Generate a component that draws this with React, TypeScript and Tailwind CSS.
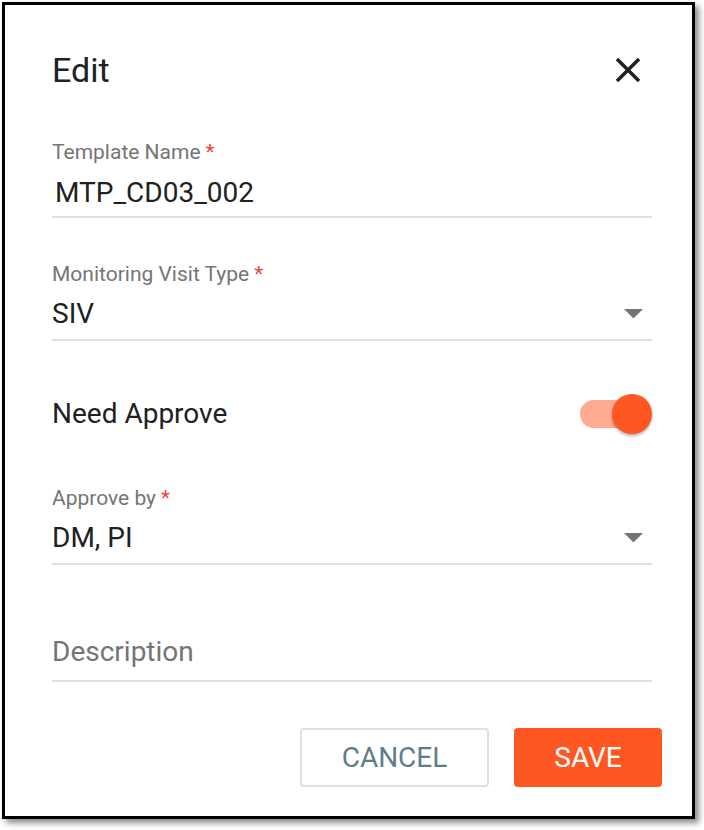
import React from 'react';

interface FieldProps {
  label: string;
  value: string;
  required?: boolean;
  select?: boolean;
  valueClass: string;
}

const Field: React.FC<FieldProps> = ({ label, value, required, select, valueClass }) => (
  <div className="border-b-2 border-[#e0e0e0]">
    <div className="h-[24px] text-[21px] leading-[24px] text-[#757575]">
      {label}
      {required && <span className="ml-[5px] text-[#f44336]">*</span>}
    </div>
    <div className={`flex items-center justify-between ${valueClass}`}>
      <span className="text-[28px] leading-[32px] text-[#212121]">{value}</span>
      {select && (
        <svg width="19" height="10" viewBox="0 0 19 10" className="mr-[9px]">
          <path d="M0 0h19L9.5 9.5z" fill="#757575" />
        </svg>
      )}
    </div>
  </div>
);

export default function App() {
  return (
    <div className="h-[830px] w-[704px] bg-white pl-[2px] pt-[2px] font-['Roboto',sans-serif]">
      <div className="flex h-[817px] w-[693px] flex-col border-[3px] border-black bg-white pl-[47px] pr-[30px] pt-[45px] shadow-[4px_4px_6px_rgba(0,0,0,0.45)]">
        <div className="mr-[10px] flex h-[40px] items-center justify-between">
          <h2 className="text-[34px] leading-[40px] text-[#212121]">Edit</h2>
          <svg width="42" height="42" viewBox="0 0 24 24" className="mr-[3px]">
            <path
              d="M19 6.41 17.59 5 12 10.59 6.41 5 5 6.41 10.59 12 5 17.59 6.41 19 12 13.41 17.59 19 19 17.59 13.41 12z"
              fill="#212121"
            />
          </svg>
        </div>

        <div className="mr-[10px] mt-[50px] flex flex-col">
          <Field label="Template Name" required value="MTP_CD03_002" valueClass="mt-[13px] pb-[7px] pl-[3px]" />

          <div className="mt-[44px]">
            <Field label="Monitoring Visit Type" required select value="SIV" valueClass="mt-[12px] pb-[9px]" />
          </div>

          <div className="mt-[53px] flex h-[40px] items-center justify-between">
            <span className="text-[28px] leading-[32px] text-[#212121]">Need Approve</span>
            <div className="relative h-[40px] w-[72px]">
              <div className="absolute left-[0px] top-[6px] h-[28px] w-[60px] rounded-full bg-[#ffab91]" />
              <div className="absolute right-[0px] top-[0px] h-[40px] w-[40px] rounded-full bg-[#ff5722] shadow-[0_2px_3px_rgba(0,0,0,0.3)]" />
            </div>
          </div>

          <div className="mt-[52px]">
            <Field label="Approve by" required select value="DM, PI" valueClass="mt-[12px] pb-[9px]" />
          </div>

          <div className="mt-[71px] border-b-2 border-[#e0e0e0] pb-[12px]">
            <span className="text-[28px] leading-[32px] text-[#757575]">Description</span>
          </div>
        </div>

        <div className="mt-[46px] flex justify-end gap-[25px]">
          <button className="h-[59px] w-[189px] rounded-[4px] border-2 border-[#e0e0e0] bg-white text-[28px] text-[#607d8b]">
            CANCEL
          </button>
          <button className="h-[59px] w-[148px] rounded-[4px] bg-[#ff5722] text-[28px] text-white">
            SAVE
          </button>
        </div>
      </div>
    </div>
  );
}
